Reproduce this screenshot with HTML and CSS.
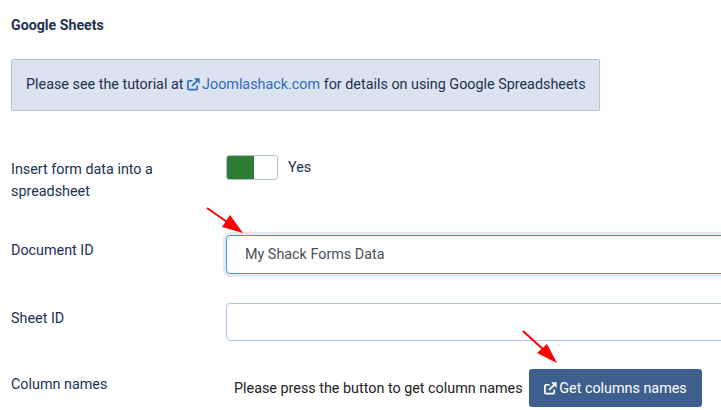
FILE: index.html
```html
<!DOCTYPE html>
<html lang="en">
<head>
    <meta charset="UTF-8">
    <title>Google Sheets</title>
    <link rel="stylesheet" href="styles.css">
</head>
<body>
    <div class="page">
        <h2 class="section-title">Google Sheets</h2>

        <div class="alert">
            Please see the tutorial at
            <a href="#" class="alert-link"><svg class="icon" viewBox="0 0 14 14"><path d="M11 8v3.2a1.3 1.3 0 0 1-1.3 1.3H2.3A1.3 1.3 0 0 1 1 11.2V4.3A1.3 1.3 0 0 1 2.3 3H6" fill="none" stroke="currentColor" stroke-width="1.8"/><path d="M5.5 8.5L12 2" fill="none" stroke="currentColor" stroke-width="2"/><path d="M7.6 .4h6V6.4z" fill="currentColor"/></svg><span class="link-text">Joomlashack.com</span></a>
            for details on using Google Spreadsheets
        </div>

        <div class="form-row row-toggle">
            <label class="form-label">Insert form data into a spreadsheet</label>
            <div class="form-control-wrap toggle-wrap">
                <span class="toggle"><span class="toggle-on"></span></span>
                <span class="toggle-text">Yes</span>
            </div>
        </div>

        <div class="form-row row-doc">
            <label class="form-label" for="docId">Document ID</label>
            <div class="form-control-wrap">
                <input class="text-input focused" id="docId" type="text" value="My Shack Forms Data">
            </div>
        </div>

        <div class="form-row row-sheet">
            <label class="form-label" for="sheetId">Sheet ID</label>
            <div class="form-control-wrap">
                <input class="text-input" id="sheetId" type="text">
            </div>
        </div>

        <div class="form-row row-columns">
            <label class="form-label">Column names</label>
            <div class="form-control-wrap columns-wrap">
                <span class="columns-hint">Please press the button to get column names</span>
                <button class="btn" type="button"><svg class="icon" viewBox="0 0 14 14"><path d="M11 8v3.2a1.3 1.3 0 0 1-1.3 1.3H2.3A1.3 1.3 0 0 1 1 11.2V4.3A1.3 1.3 0 0 1 2.3 3H6" fill="none" stroke="currentColor" stroke-width="1.8"/><path d="M5.5 8.5L12 2" fill="none" stroke="currentColor" stroke-width="2"/><path d="M7.6 .4h6V6.4z" fill="currentColor"/></svg><span class="btn-text">Get columns names</span></button>
            </div>
        </div>
    </div>

    <!-- red annotation arrows drawn on top of the screenshot -->
    <svg class="arrow arrow-doc" viewBox="0 0 50 40"><path d="M1 1L24 17" stroke="#f00" stroke-width="2"/><path d="M37 26L16 20L24 8z" fill="#f00"/></svg>
    <svg class="arrow arrow-btn" viewBox="0 0 50 50"><path d="M1 2L23 22" stroke="#f00" stroke-width="2"/><path d="M35 34L15 24L25 15z" fill="#f00"/></svg>
</body>
</html>
```

FILE: styles.css
```css
html, body {
    margin: 0;
    height: 410px;
    overflow: hidden;
}

body {
    position: relative;
    background-color: #fff;
    font-family: Roboto, "Liberation Sans", sans-serif;
    font-size: 14.35px;
    color: #22314d;
}

.page {
    padding: 17px 0 0 11px;
}

.section-title {
    margin: 0 0 26px;
    font-size: 14.2px;
    line-height: 16px;
    font-weight: 700;
    color: #22314d;
}

.alert {
    box-sizing: border-box;
    width: 589px;
    height: 52px;
    padding: 0 14px;
    line-height: 50px;
    background-color: #dce3f0;
    border: 1px solid #b2c5dd;
    border-radius: 2px;
    white-space: nowrap;
}

.alert-link {
    color: #2f6bbd;
    text-decoration: none;
}

.icon {
    width: 13px;
    height: 13px;
    vertical-align: -2px;
}

.link-text {
    margin-left: 2px;
}

.btn-text {
    margin-left: 2px;
}

.form-row {
    display: flex;
}

.form-label {
    width: 215px;
    flex: none;
    line-height: 23px;
    color: #1c3052;
}

.form-control-wrap {
    flex: 1;
    min-width: 0;
}

.row-toggle {
    margin-top: 44px;
    height: 80px;
}

.row-toggle .form-label {
    width: 160px;
    margin-right: 55px;
    padding-top: 4px;
    line-height: 22px;
}

.toggle-wrap {
    display: flex;
    align-items: flex-start;
}

.toggle {
    box-sizing: border-box;
    display: block;
    width: 52px;
    height: 25px;
    background-color: #fff;
    border: 1px solid #a9c0d8;
    border-radius: 3px;
    overflow: hidden;
}

.toggle-on {
    display: block;
    width: 27px;
    height: 100%;
    background-color: #2e7d32;
}

.toggle-text {
    margin-left: 10px;
    line-height: 25px;
}

.row-doc {
    height: 68px;
}

.row-doc .form-label {
    padding-top: 4px;
}

.text-input {
    box-sizing: border-box;
    display: block;
    width: 520px;
    padding: 0 18px;
    font-family: inherit;
    font-size: 14.35px;
    color: #495057;
    background-color: #fff;
    border: 1px solid #b2c5e0;
    border-radius: 4px;
    outline: none;
}

.text-input.focused {
    height: 39px;
    border-color: #3d9bf5;
    box-shadow: 0 0 0 3px #e8e8e8;
}

.row-sheet {
    height: 66px;
}

.row-sheet .form-label {
    padding-top: 4px;
}

.row-sheet .text-input {
    height: 38px;
}

.row-columns .form-label {
    padding-top: 4px;
}

.columns-wrap {
    display: flex;
    align-items: center;
    padding-left: 8px;
}

.columns-hint {
    width: 295px;
    flex: none;
    color: #222;
}

.btn {
    box-sizing: border-box;
    width: 173px;
    height: 38px;
    padding: 0;
    font-family: inherit;
    font-size: 14.35px;
    color: #fff;
    background-color: #3d5f8e;
    border: none;
    border-radius: 3px;
}

.arrow {
    position: absolute;
}

.arrow-doc {
    left: 206px;
    top: 207px;
    width: 50px;
    height: 40px;
}

.arrow-btn {
    left: 522px;
    top: 329px;
    width: 50px;
    height: 50px;
}
```
